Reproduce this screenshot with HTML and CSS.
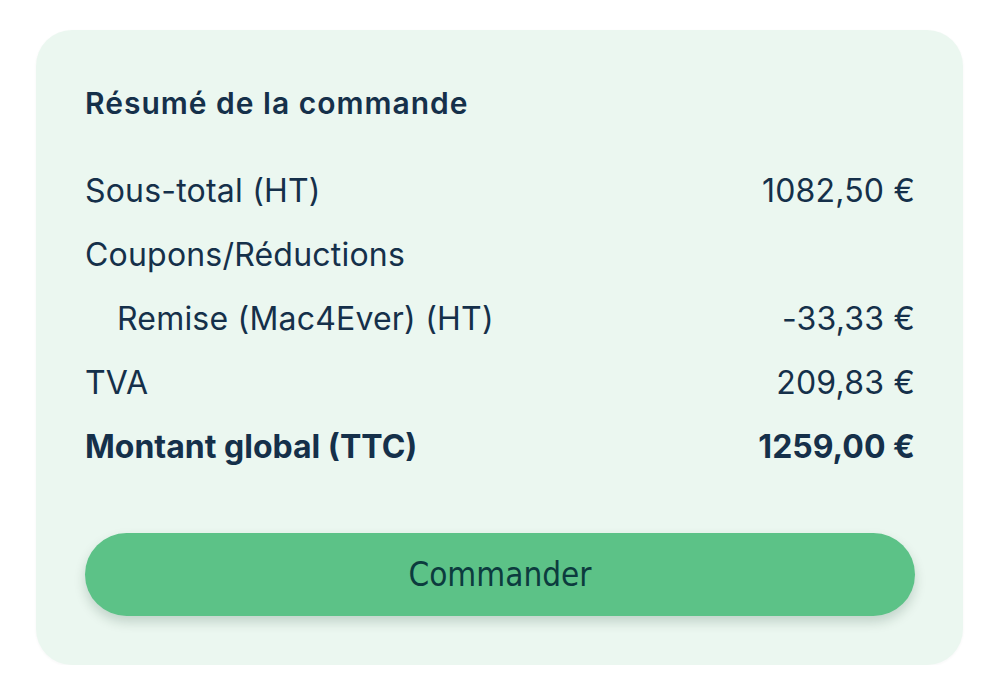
FILE: index.html
```html
<!DOCTYPE html>
<html lang="fr">
<head>
<meta charset="utf-8">
<title>Résumé de la commande</title>
<link rel="stylesheet" href="styles.css">
</head>
<body>
<section class="card">
  <h2 class="title">Résumé de la commande</h2>
  <div class="rows">
    <div class="row"><span>Sous-total (HT)</span><span>1082,50 €</span></div>
    <div class="row"><span>Coupons/Réductions</span></div>
    <div class="row sub"><span>Remise (Mac4Ever) (HT)</span><span>-33,33 €</span></div>
    <div class="row"><span>TVA</span><span>209,83 €</span></div>
    <div class="row total"><span>Montant global (TTC)</span><span>1259,00 €</span></div>
  </div>
  <button class="btn">Commander</button>
</section>
</body>
</html>
```
FILE: styles.css
```css
* { box-sizing: border-box; }
html, body { margin: 0; padding: 0; background: #ffffff; }
body {
  font-family: "Inter", "Liberation Sans", sans-serif;
  color: #15304a;
  padding: 30px 23px 0 36px;
}
.card {
  width: 927px;
  height: 635px;
  background: #ebf7f0;
  border-radius: 36px;
  padding: 53px 48px 48px 49px;
  display: flex;
  flex-direction: column;
  box-shadow: 0 1px 3px rgba(0, 60, 40, 0.04);
}
.title {
  margin: 0;
  font-size: 30px;
  line-height: 40px;
  font-weight: 600;
  letter-spacing: 1px;
  color: #15304a;
}
.rows {
  margin-top: 35px;
  display: flex;
  flex-direction: column;
}
.row {
  height: 64px;
  display: flex;
  align-items: center;
  justify-content: space-between;
  font-size: 32px;
  letter-spacing: 0.2px;
}
.row.sub { padding-left: 32px; }
.row.total { font-weight: 700; letter-spacing: 0; }
.btn {
  margin-top: 55px;
  height: 83px;
  width: 100%;
  border: none;
  border-radius: 42px;
  background: #5cc287;
  color: #0c3b3e;
  font-family: "Liberation Sans Narrow", "DejaVu Sans Condensed", sans-serif;
  font-size: 33px;
  letter-spacing: 0;
  box-shadow: 0 6px 12px rgba(0, 50, 30, 0.18);
}
```
